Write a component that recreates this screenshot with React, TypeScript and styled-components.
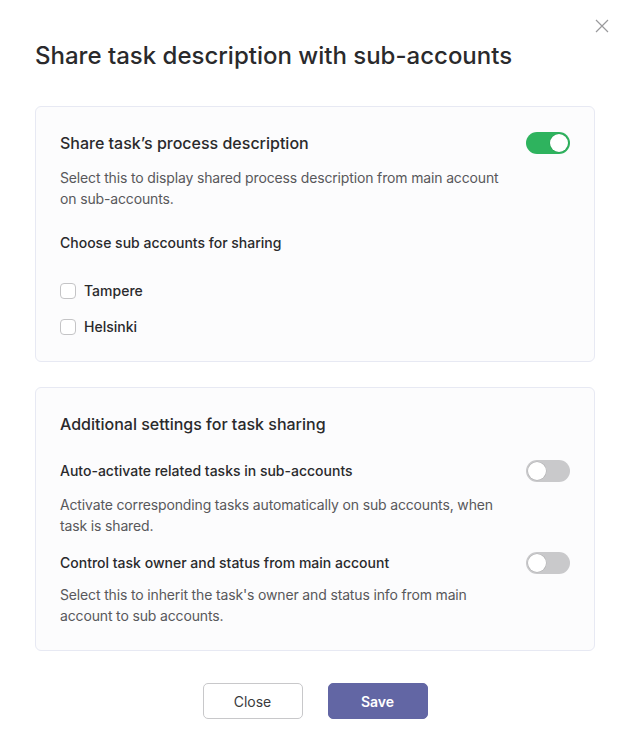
import React, { useState } from "react";
import styled, { createGlobalStyle } from "styled-components";

const GlobalStyle = createGlobalStyle`
  html, body {
    margin: 0;
    padding: 0;
    background: #ffffff;
    font-family: Inter, "Noto Sans", sans-serif;
    color: #2b2b2d;
  }
`;

const Modal = styled.div`
  position: relative;
  width: 633px;
  min-height: 756px;
  box-sizing: border-box;
  padding: 38px 38px 0 35px;
  background: #fff;
`;

const CloseIcon = styled.button`
  position: absolute;
  top: 19px;
  right: 24px;
  width: 14px;
  height: 14px;
  padding: 0;
  border: none;
  background: none;
  cursor: pointer;
  display: flex;
`;

const Title = styled.h2`
  margin: 0 0 32px;
  font-size: 24px;
  line-height: 36px;
  font-weight: 500;
  color: #2a2a2c;
`;

const Card = styled.section`
  border: 1px solid #e7e9f3;
  border-radius: 6px;
  background: #fcfcfd;
  padding: 24px;
  & + & {
    margin-top: 25px;
  }
`;

const Row = styled.div<{ $gap?: number }>`
  display: flex;
  align-items: center;
  justify-content: space-between;
  margin-top: ${({ $gap }) => $gap ?? 0}px;
`;

const CardTitle = styled.div`
  font-size: 16px;
  line-height: 24px;
  font-weight: 500;
  color: #2a2a2c;
`;

const Label = styled.div<{ $gap?: number }>`
  font-size: 14px;
  line-height: 20px;
  font-weight: 500;
  color: #2a2a2c;
  margin-top: ${({ $gap }) => $gap ?? 0}px;
`;

const Description = styled.p<{ $gap?: number }>`
  margin: ${({ $gap }) => $gap ?? 12}px 0 0;
  max-width: 450px;
  font-size: 14px;
  line-height: 21px;
  letter-spacing: -0.15px;
  color: #58585b;
`;

const Track = styled.button<{ $on: boolean }>`
  position: relative;
  width: 44px;
  height: 22px;
  flex: none;
  padding: 0;
  border: none;
  border-radius: 11px;
  background: ${({ $on }) => ($on ? "#2eb35e" : "#c9c9cb")};
  cursor: pointer;
  &::after {
    content: "";
    position: absolute;
    top: 2px;
    left: ${({ $on }) => ($on ? "24px" : "2px")};
    width: 18px;
    height: 18px;
    border-radius: 50%;
    background: #fff;
    box-shadow: 0 0 0 0.5px rgba(0, 0, 0, 0.12);
  }
`;

const CheckList = styled.div`
  display: flex;
  flex-direction: column;
  gap: 16px;
  margin-top: 28px;
`;

const CheckRow = styled.label`
  display: flex;
  align-items: center;
  gap: 8px;
  font-size: 14px;
  line-height: 20px;
  font-weight: 500;
  color: #2a2a2c;
  cursor: pointer;
`;

const Box = styled.span<{ $checked: boolean }>`
  width: 14px;
  height: 14px;
  border: 1px solid #c4c4c6;
  border-radius: 4px;
  background: ${({ $checked }) => ($checked ? "#6266a4" : "#fff")};
`;

const Footer = styled.div`
  display: flex;
  justify-content: center;
  gap: 25px;
  margin-top: 32px;
`;

const Button = styled.button<{ $primary?: boolean }>`
  width: 100px;
  height: 36px;
  border-radius: 5px;
  font-family: Inter, "Noto Sans", sans-serif;
  font-size: 14px;
  font-weight: ${({ $primary }) => ($primary ? 600 : 400)};
  cursor: pointer;
  border: 1px solid ${({ $primary }) => ($primary ? "#6266a4" : "#c8c8ca")};
  background: ${({ $primary }) => ($primary ? "#6266a4" : "#fff")};
  color: ${({ $primary }) => ($primary ? "#fff" : "#3a3a3c")};
`;

function Toggle({ on, onChange }: { on: boolean; onChange: () => void }) {
  return <Track $on={on} onClick={onChange} aria-pressed={on} />;
}

export default function App() {
  const [share, setShare] = useState(true);
  const [autoActivate, setAutoActivate] = useState(false);
  const [control, setControl] = useState(false);
  const [accounts, setAccounts] = useState<Record<string, boolean>>({
    Tampere: false,
    Helsinki: false,
  });

  return (
    <>
      <GlobalStyle />
      <Modal>
        <CloseIcon aria-label="Close">
          <svg width="14" height="14" viewBox="0 0 14 14">
            <path d="M1 1L13 13M13 1L1 13" stroke="#9a9a9c" strokeWidth="1.2" />
          </svg>
        </CloseIcon>
        <Title>Share task description with sub-accounts</Title>

        <Card>
          <Row>
            <CardTitle>Share task’s process description</CardTitle>
            <Toggle on={share} onChange={() => setShare(!share)} />
          </Row>
          <Description>
            Select this to display shared process description from main account
            on sub-accounts.
          </Description>
          <Label $gap={24}>Choose sub accounts for sharing</Label>
          <CheckList>
            {Object.keys(accounts).map((name) => (
              <CheckRow
                key={name}
                onClick={() =>
                  setAccounts((prev) => ({ ...prev, [name]: !prev[name] }))
                }
              >
                <Box $checked={accounts[name]} />
                {name}
              </CheckRow>
            ))}
          </CheckList>
        </Card>

        <Card>
          <CardTitle>Additional settings for task sharing</CardTitle>
          <Row $gap={24}>
            <Label>Auto-activate related tasks in sub-accounts</Label>
            <Toggle on={autoActivate} onChange={() => setAutoActivate(!autoActivate)} />
          </Row>
          <Description>
            Activate corresponding tasks automatically on sub accounts, when
            task is shared.
          </Description>
          <Row $gap={16}>
            <Label>Control task owner and status from main account</Label>
            <Toggle on={control} onChange={() => setControl(!control)} />
          </Row>
          <Description $gap={10}>
            Select this to inherit the task's owner and status info from main
            account to sub accounts.
          </Description>
        </Card>

        <Footer>
          <Button>Close</Button>
          <Button $primary>Save</Button>
        </Footer>
      </Modal>
    </>
  );
}
